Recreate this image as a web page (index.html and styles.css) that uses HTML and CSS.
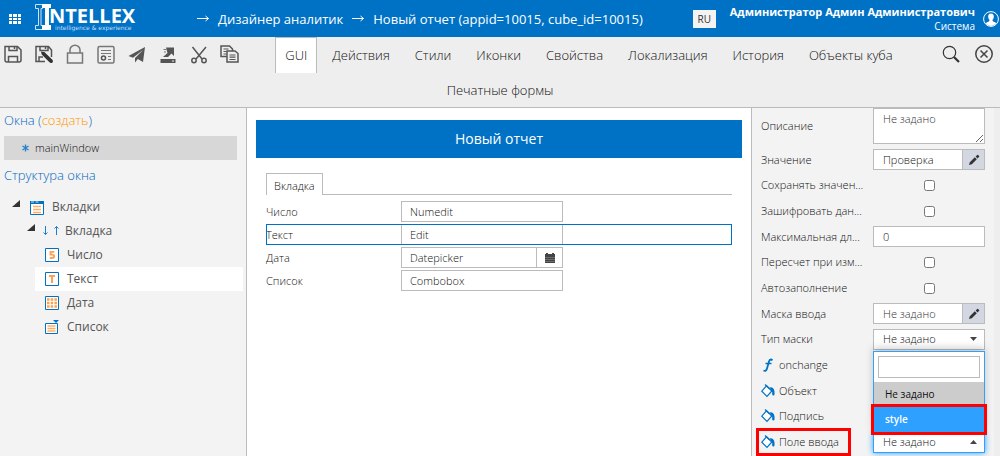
FILE: index.html
```html
<!DOCTYPE html>
<html lang="ru">
<head>
<meta charset="utf-8">
<title>Дизайнер аналитик</title>
<link rel="stylesheet" href="styles.css">
</head>
<body>
<svg class="sprite" aria-hidden="true">
  <symbol id="arrow" viewBox="0 0 12 7"><path d="M0 3.500h11.500M8.500 1l3 2.500-3 2.500" fill="none" stroke="#fff"/></symbol>
  <symbol id="pencil" viewBox="0 0 12 12"><path d="M1 11l.8-2.800L6.800 3.200l2 2L3.800 10.200zM7.600 2.400L9.200.900q.4-.4.9 0l1 1q.4.500 0 .9L9.600 4.400z"/></symbol>
  <symbol id="bucket" viewBox="0 0 14 14"><path d="M5.500 1.800L10.800 7 6 12.400.8 7.200z" fill="#fff" stroke="#0072c6" stroke-width="1.200"/><path d="M4 .5l4.500 4.300" stroke="#0072c6" stroke-width="1.200"/><path d="M8.500 3.500q3-.8 4.200 1.500 1.300 2.300.9 5-.3 1.500-1.300 1.500t-1.200-1.500q.4-1.500-.1-3z" fill="#0072c6"/></symbol>
</svg>

<header class="header">
  <button class="apps" aria-label="Приложения">
    <svg width="12" height="10" viewBox="0 0 12 10" fill="#fff"><path d="M0 0h3v3H0zM4 0h4v3H4zM9 0h3v3H9zM0 4h3v2H0zM4 4h4v2H4zM9 4h3v2H9zM0 7h3v3H0zM4 7h4v3H4zM9 7h3v3H9z"/></svg>
  </button>
  <a class="logo" href="#" aria-label="Intellex">
    <svg width="104" height="30" viewBox="0 0 104 30">
      <path d="M.5.5h7v4H6v17h1.500v4h-7v-4h3v-17h-3z" fill="none" stroke="#cfe3f5"/>
      <path d="M7 0h9v4h-2v17h2v5H7v-5h3V4H7z" fill="#fff"/>
      <text class="logo-name" x="14" y="19">NTELLEX</text>
      <text class="logo-tag" x="20" y="26">intelligence &amp; experience</text>
    </svg>
  </a>
  <nav class="crumbs">
    <svg width="12" height="7"><use href="#arrow"/></svg>
    <a href="#">Дизайнер аналитик</a>
    <svg width="12" height="7"><use href="#arrow"/></svg>
    <a href="#">Новый отчет (appid=10015, cube_id=10015)</a>
  </nav>
  <button class="lang">RU</button>
  <div class="user">
    <div class="user-name">Администратор Админ Администратович</div>
    <div class="user-org">Система</div>
  </div>
  <button class="avatar" aria-label="Профиль">
    <svg width="16" height="16" viewBox="0 0 16 16"><circle cx="8" cy="8" r="7.400" fill="none" stroke="#fff"/><path d="M8 2.500c2 0 3 1.300 2.800 3.500-.1 1.500-.8 2.400-1.300 3 0 1.300.6 1.600 2 2.100 1 .4 1.500.8 1.700 1.400A7 7 0 0 1 8 15a7 7 0 0 1-5.200-2.500c.2-.6.700-1 1.700-1.400 1.400-.5 2-.8 2-2.100-.5-.6-1.200-1.500-1.300-3C5 3.800 6 2.500 8 2.500z" fill="#fff"/></svg>
  </button>
</header>

<div class="toolbar">
  <div class="toolbar-row">
    <div class="tools">
      <button aria-label="Сохранить"><svg width="20" height="20" viewBox="0 0 20 20" fill="none" stroke="#555" stroke-width="1.500"><path d="M2.500 2.500h12L18 6v10q0 2-2 2H4q-2 0-2-2V2.500z"/><path d="M6 2.500v4h8v-4M5.500 18v-5.500h9V18M11.500 3v2"/></svg></button>
      <button aria-label="Сохранить как"><svg width="20" height="20" viewBox="0 0 20 20" fill="none" stroke="#555" stroke-width="1.500"><path d="M11 17.500H2v-15h12.500L17.500 6v7M6 2.500v4h8v-4M5 17.500V13h4M11.500 3v2"/><path d="M8 8.500l2 .3 8 7.700q.5 1.300-.3 1.700-.9.300-1.700-.5L8.400 10z" fill="#333" stroke="#333"/></svg></button>
      <button aria-label="Блокировка"><svg width="20" height="20" viewBox="0 0 20 20" fill="none" stroke="#777" stroke-width="1.500"><path d="M2.500 9h15v10h-15zM5 9V6a5 4.800 0 0 1 10 0v3"/></svg></button>
      <button aria-label="Отчет"><svg width="20" height="20" viewBox="0 0 20 20" fill="none" stroke="#777" stroke-width="1.500"><rect x="2" y="2.500" width="16" height="16.500" rx="1.500"/><path d="M5 6.500h10M5 9.500h10M12 12.500h3M12 15.500h3" stroke-width="1.200"/><circle cx="7.500" cy="14" r="2" stroke="#555"/></svg></button>
      <button aria-label="Отправить"><svg width="20" height="20" viewBox="0 0 20 20" fill="#555"><path d="M18 3L1.500 12l4.500 1.700L16.500 5.500 8 14v4.500l2.800-3.500L16 18z"/></svg></button>
      <button aria-label="Экспорт"><svg width="20" height="20" viewBox="0 0 20 20" fill="#555"><path d="M8 3.500h8v8.500l-2.500-2.500-3.500 3.500H5l4.500-4zM2.500 15h15v4h-15z"/><path d="M5.500 5.500h3M6 8h2" stroke="#777"/><path d="M14 17h2" stroke="#eee"/></svg></button>
      <button aria-label="Вырезать"><svg width="20" height="20" viewBox="0 0 20 20" fill="none" stroke="#555" stroke-width="1.500"><path d="M3.500 3l9.500 12M17 3l-10 12"/><circle cx="5" cy="16.500" r="2.200"/><circle cx="15" cy="16.500" r="2.200"/></svg></button>
      <button aria-label="Копировать"><svg width="20" height="20" viewBox="0 0 20 20" fill="#eee" stroke="#555" stroke-width="1.500"><path d="M1 2h8.500l3 3v7.500H1z"/><path d="M3.500 5h5M3.500 7.500h3M3.500 10h3" stroke-width="1.200"/><path d="M7 7h8l3 2.500V18H7z"/><path d="M9.500 11h6M9.500 13.200h6M9.500 15.500h6" stroke-width="1.200"/></svg></button>
    </div>
    <nav class="tabs">
      <a class="active" href="#">GUI</a><a href="#">Действия</a><a href="#">Стили</a><a href="#">Иконки</a><a href="#">Свойства</a><a href="#">Локализация</a><a href="#">История</a><a href="#">Объекты куба</a>
    </nav>
    <div class="tools tools-end">
      <button aria-label="Поиск"><svg width="20" height="20" viewBox="0 0 20 20" fill="none" stroke="#333"><circle cx="8.500" cy="8.500" r="6.200" stroke-width="1.200"/><path d="M13 13l5 5" stroke-width="2.200"/></svg></button>
      <button aria-label="Закрыть"><svg width="20" height="20" viewBox="0 0 20 20" fill="none" stroke="#444" stroke-width="1.500"><circle cx="10" cy="10" r="8.200"/><path d="M6.500 6.500l7 7M13.500 6.500l-7 7"/></svg></button>
    </div>
  </div>
  <nav class="tabs"><a href="#">Печатные формы</a></nav>
</div>

<main class="main">
  <aside class="sidebar">
    <h2>Окна (<a class="create" href="#">создать</a>)</h2>
    <a class="window" href="#"><svg width="7" height="8" viewBox="0 0 7 8" stroke="#2a7fcb" stroke-width="1.300"><path d="M3.500.5v7M.5 2l6 4M6.500 2l-6 4"/></svg>mainWindow</a>
    <h2>Структура окна</h2>
    <ul class="tree">
      <li class="node level1"><svg class="twist" width="8" height="8"><path d="M8 0v7H0z" fill="#333"/></svg><svg width="14" height="15" viewBox="0 0 14 15"><path d="M.5 3.500h13v11H.5z" fill="#fff" stroke="#0072c6"/><path d="M0 1h14v3H0z" fill="#0072c6"/><path d="M1 2h3M5.500 2h3" stroke="#cde"/><path d="M3 6.500h8M3 9.500h8M3 12.500h8" stroke="#ffb066" stroke-width="1.500"/></svg><span>Вкладки</span></li>
      <li class="node level2"><svg class="twist" width="8" height="8"><path d="M8 0v7H0z" fill="#333"/></svg><svg width="16" height="10" viewBox="0 0 16 10" fill="none" stroke="#1d7ccc"><path d="M2.500 0v8.500M.5 6.500l2 2 2-2M13.500 9V.5M11.500 2.500l2-2 2 2"/></svg><span>Вкладка</span></li>
      <li class="node level3"><svg width="14" height="14" viewBox="0 0 14 14"><path d="M.5.5h13v13H.5z" fill="#fff" stroke="#0072c6"/><path d="M9.300 3.800H5.500v2.800h2q1.700.2 1.700 1.700 0 1.700-2.500 1.700H4.800" fill="none" stroke="#ffa04d" stroke-width="1.800"/></svg><span>Число</span></li>
      <li class="node level3 selected"><svg width="14" height="14" viewBox="0 0 14 14"><path d="M.5.5h13v13H.5z" fill="#fff" stroke="#0072c6"/><path d="M4 4h6M7 4v7" stroke="#ffa04d" stroke-width="2"/></svg><span>Текст</span></li>
      <li class="node level3"><svg width="14" height="14" viewBox="0 0 14 14"><path d="M.5.5h13v13H.5z" fill="#fff" stroke="#0072c6"/><path d="M2 3.500h10M2 7h10M2 10.500h10" stroke="#ffa04d" stroke-width="2.500" stroke-dasharray="2.500 1.200"/></svg><span>Дата</span></li>
      <li class="node level3"><svg width="14" height="14" viewBox="0 0 14 14"><path d="M.5 3.500h12v10H.5z" fill="#fff" stroke="#0072c6"/><path d="M8 0h6l-3 3z" fill="#0072c6"/><path d="M2.500 6h8M2.500 8.500h8M2.500 11h8" stroke="#ffb066" stroke-width="1.500"/></svg><span>Список</span></li>
    </ul>
  </aside>

  <section class="canvas">
    <h1>Новый отчет</h1>
    <div class="form">
      <div class="form-tabs"><a href="#">Вкладка</a></div>
      <div class="field"><label for="f1">Число</label><input id="f1" value="Numedit"></div>
      <div class="field current"><label for="f2">Текст</label><input id="f2" value="Edit"></div>
      <div class="field"><label for="f3">Дата</label><span class="date"><input id="f3" value="Datepicker"><button aria-label="Календарь"><svg width="10" height="10" viewBox="0 0 10 10"><path d="M0 1h1V0h2v1h4V0h2v1h1v9H0z" fill="#444"/><path d="M.5 4.500h9M.5 6.500h9M.5 8.500h9" stroke="#bbb" stroke-dasharray="1 1" stroke-width=".7"/></svg></button></span></div>
      <div class="field"><label for="f4">Список</label><input id="f4" value="Combobox"></div>
    </div>
  </section>

  <aside class="props">
    <div class="prop prop-area"><label for="p1">Описание</label><textarea id="p1" placeholder="Не задано"></textarea></div>
    <div class="prop-list">
      <div class="prop"><label for="p2">Значение</label><span class="edit"><input id="p2" value="Проверка"><button aria-label="Изменить"><svg width="12" height="12"><use href="#pencil"/></svg></button></span></div>
      <div class="prop"><label for="p3">Сохранять значен...</label><input id="p3" type="checkbox"></div>
      <div class="prop"><label for="p4">Зашифровать дан...</label><input id="p4" type="checkbox"></div>
      <div class="prop"><label for="p5">Максимальная дл...</label><input id="p5" class="box" value="0"></div>
      <div class="prop"><label for="p6">Пересчет при изм...</label><input id="p6" type="checkbox"></div>
      <div class="prop"><label for="p7">Автозаполнение</label><input id="p7" type="checkbox"></div>
      <div class="prop"><label for="p8">Маска ввода</label><span class="edit"><input id="p8" placeholder="Не задано"><button aria-label="Изменить"><svg width="12" height="12"><use href="#pencil"/></svg></button></span></div>
      <div class="prop"><label for="p9">Тип маски</label><span class="pick"><select id="p9"><option>Не задано</option></select><svg width="7" height="4"><path d="M0 0h7L3.500 4z"/></svg></span></div>
      <div class="prop"><a class="event" href="#"><svg width="14" height="14" viewBox="0 0 14 14" fill="none" stroke="#0072c6"><path d="M11.500 2.200Q9 .3 8 3.500L6 10.500q-1 3.300-3.500 2" stroke-width="1.800"/><path d="M4.500 5.500h6" stroke-width="1.500"/></svg>onchange</a></div>
      <div class="prop"><a class="event" href="#"><svg width="14" height="14"><use href="#bucket"/></svg>Объект</a></div>
      <div class="prop"><a class="event" href="#"><svg width="14" height="14"><use href="#bucket"/></svg>Подпись</a></div>
      <div class="prop marked"><label class="event" for="p10"><svg width="14" height="14"><use href="#bucket"/></svg>Поле ввода</label>
        <span class="pick open"><select id="p10"><option>Не задано</option><option>style</option></select><svg width="7" height="4"><path d="M0 4h7L3.500 0z"/></svg>
          <span class="dropdown">
            <span class="search"><input aria-label="Поиск стиля"></span>
            <button class="option">Не задано</button>
            <button class="option hover">style</button>
          </span>
        </span>
      </div>
    </div>
  </aside>
</main>
</body>
</html>
```
FILE: styles.css
```css
* { box-sizing: border-box; }
body {
  margin: 0;
  min-height: 100vh;
  display: flex;
  flex-direction: column;
  background: #f3f3f3;
  color: #111;
  font: 300 12px/16px "Open Sans", "Noto Sans", sans-serif;
}
a { color: inherit; text-decoration: none; }
button { margin: 0; padding: 0; border: 0; background: none; color: inherit; font: inherit; cursor: pointer; }
input, select, textarea { margin: 0; border-radius: 0; color: inherit; font: inherit; outline: 0; }
svg { display: block; flex: none; overflow: visible; }
.sprite { position: absolute; width: 0; height: 0; }

.header { display: flex; align-items: center; height: 37px; padding: 0 1px 0 9px; background: #0072c6; color: #fff; font-weight: 400; }
.logo { margin-left: 14px; }
.logo-name { fill: #fff; font: 700 20px "Open Sans", sans-serif; }
.logo-tag { fill: #c4dcf2; font: 6px "DejaVu Sans", sans-serif; }
.crumbs { display: flex; align-items: center; gap: 9px; margin-left: 58px; font-size: 13px; white-space: nowrap; }
.lang { width: 23px; height: 18px; margin-left: auto; background: #f3f3f3; color: #333; font-size: 10px; line-height: 18px; }
.user { margin-left: 14px; text-align: right; white-space: nowrap; }
.user-name { font-size: 11px; font-weight: 700; line-height: 15px; }
.user-org { font-size: 10px; line-height: 14px; }
.avatar { margin-left: 8px; }

.toolbar { border-bottom: 1px solid #bbb; background: #eee; }
.toolbar-row { display: flex; }
.tools { display: flex; gap: 11px; padding: 7px 0 0 3px; align-items: flex-start; }
.tools-end { gap: 13px; padding-right: 6px; }
.tabs { flex: 1; display: flex; justify-content: center; gap: 5px; font-size: 13px; white-space: nowrap; }
.tabs a { height: 35px; padding: 8px 10px; line-height: 20px; }
.tabs .active { height: 36px; margin-bottom: -1px; padding: 7px 9px; border: 1px solid #bbb; border-bottom: 0; background: #fff; }

.main { flex: 1; display: grid; grid-template-columns: 247px minmax(0, 1fr) 249px; }
.sidebar { padding: 2px 9px 0 4px; border-right: 1px solid #bbb; }
.sidebar h2 { margin: 0; color: #0068bd; font-size: 13px; font-weight: 300; line-height: 20px; }
.create { color: #ff9800; }
.window { display: flex; align-items: center; gap: 6px; height: 24px; margin: 6px 0 5px; padding-left: 18px; background: #d7d7d7; font-size: 11px; }
.tree { margin: 10px -6px 0 0; padding: 0; list-style: none; color: #555; font-weight: 400; }
.node { display: flex; align-items: center; gap: 8px; height: 24px; }
.twist { margin: -6px 2px 0 0; }
.level1 { padding-left: 8px; }
.level2 { padding-left: 23px; gap: 6px; }
.level3 { margin-left: 31px; padding-left: 10px; }
.selected { background: #fff; }

.canvas { padding: 12px 9px 0; background: #fff; }
.canvas h1 { margin: 0; background: #0072c6; color: #fff; font-size: 14px; font-weight: 400; line-height: 38px; text-align: center; }
.form { padding: 15px 10px 0; font-size: 11px; }
.form-tabs { display: flex; margin-bottom: 6px; border-bottom: 1px solid #bbb; }
.form-tabs a { margin-bottom: -1px; padding: 4px 7px 1px; border: 1px solid #bbb; border-bottom: 0; background: #fff; }
.field { display: grid; grid-template-columns: 135px 162px; align-items: center; margin-bottom: 2px; min-height: 21px; }
.field input { width: 100%; height: 21px; padding: 0 8px; border: 1px solid #bbb; }
.current { outline: 1px solid #0072c6; outline-offset: -1px; }
.date { display: flex; }
.date input { flex: 1; min-width: 0; }
.date button { display: grid; place-items: center; width: 26px; border: 1px solid #bbb; border-left: 0; }

.props { display: flex; flex-direction: column; min-width: 0; padding: 0 9px 1px; border-left: 1px solid #bbb; border-right: 6px solid #eee; font-size: 11px; }
.prop-list { flex: 1; display: grid; grid-auto-rows: minmax(25px, 1fr); }
.prop { display: grid; grid-template-columns: 106px 112px; column-gap: 6px; align-items: center; white-space: nowrap; }
.prop-area { padding-bottom: 3px; }
.prop textarea { display: block; width: 100%; height: 36px; padding: 2px 9px; border: 1px solid #bbb; background: #fff; resize: vertical; }
::placeholder { color: #333; opacity: 1; }
.prop input[type="checkbox"] { justify-self: center; width: 11px; height: 11px; }
.box, .edit { width: 100%; height: 21px; border: 1px solid #bbb; background: #fff; }
.prop .box { padding: 0 9px; }
.edit { display: flex; }
.edit input { flex: 1; min-width: 0; padding: 0 9px; border: 0; background: none; }
.edit button { display: grid; place-items: center; width: 22px; border-left: 1px solid #bbb; background: #d3d7e2; fill: #333; }
.pick { position: relative; display: block; }
.pick select { appearance: none; display: block; width: 100%; height: 21px; padding: 0 9px; border: 1px solid #bbb; background: #fff; }
.pick > svg { position: absolute; right: 8px; top: 8px; fill: #444; pointer-events: none; }
.event { display: flex; align-items: center; gap: 4px; }

.open { box-shadow: 0 0 6px #2ea0ff; }
.open select { border-color: #2ea0ff; border-top: 0; }
.dropdown { position: absolute; left: 0; right: 0; bottom: 100%; border: 1px solid #2ea0ff; border-bottom: 0; background: #fff; box-shadow: 0 -3px 8px rgba(0, 0, 0, .2); }
.search { display: block; padding: 4px; }
.search input { display: block; width: 100%; height: 22px; border: 1px solid #bbb; }
.option { display: block; width: 100%; height: 25px; padding: 0 11px; background: #ccc; font-size: 10px; font-weight: 400; text-align: left; }
.hover { position: relative; background: #2ea0ff; color: #fff; font-weight: 600; outline: 3px solid #f00; }
.marked > label { margin: 0 18px 0 -3px; padding: 4px 3px; outline: 3px solid #f00; outline-offset: -1px; }
```
